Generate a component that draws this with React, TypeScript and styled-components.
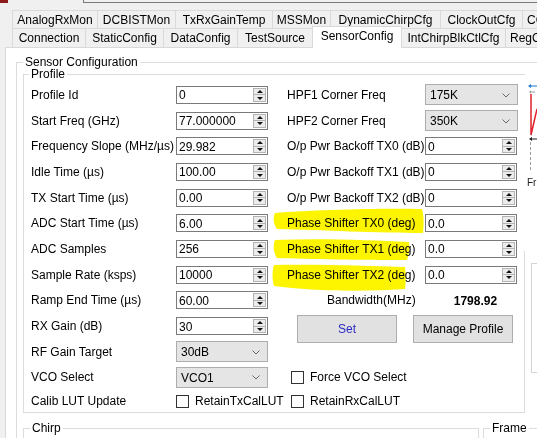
import React from 'react';
import styled, { createGlobalStyle, css } from 'styled-components';

const GlobalStyle = createGlobalStyle`
  html, body {
    margin: 0;
    padding: 0;
    background: #f0f0f0;
    overflow: hidden;
  }
  body {
    font-family: "Liberation Sans", Arial, sans-serif;
    font-size: 12px;
    color: #000;
  }
`;

const Root = styled.div`
  position: relative;
  width: 537px;
  height: 438px;
  overflow: hidden;
  display: flex;
  flex-direction: column;
  background: #f0f0f0;
`;

const TopStrip = styled.div`
  display: flex;
  height: 10px;
  flex: none;
`;

const AppIcon = styled.div`
  width: 8px;
  height: 3px;
  background: #8e1b1b;
`;

const TextBoxEdge = styled.div`
  margin-left: 75px;
  flex: 1;
  height: 2px;
  border-left: 1px solid #7a7a7a;
  border-bottom: 1px solid #7a7a7a;
`;

const TabRow = styled.div<{ $h: number }>`
  position: relative;
  z-index: 2;
  display: flex;
  align-items: flex-start;
  height: ${p => p.$h}px;
  padding-left: 12px;
  flex: none;
`;

const Tab = styled.div<{ $w: number; $active?: boolean; $clipped?: boolean }>`
  flex: none;
  box-sizing: border-box;
  width: ${p => p.$w}px;
  height: 100%;
  margin-right: -1px;
  display: flex;
  align-items: center;
  justify-content: ${p => (p.$clipped ? 'flex-start' : 'center')};
  padding-left: ${p => (p.$clipped ? '4px' : '0')};
  white-space: nowrap;
  border: 1px solid #d9d9d9;
  border-bottom: none;
  background: #f0f0f0;
  ${p =>
    p.$active &&
    css`
      position: relative;
      z-index: 1;
      height: 22px;
      margin-top: -2px;
      padding-bottom: 3px;
      background: #fff;
    `}
`;

const Page = styled.div`
  flex: 1;
  margin-left: 5px;
  border-left: 1px solid #d9d9d9;
  border-top: 1px solid #d9d9d9;
  background: #fff;
  overflow: hidden;
`;

const Group = styled.fieldset<{ $w: number; $mt: number; $ml: number; $h?: number }>`
  box-sizing: border-box;
  width: ${p => p.$w}px;
  ${p => p.$h && `min-height: ${p.$h}px;`}
  margin: ${p => p.$mt}px 0 0 ${p => p.$ml}px;
  padding: 0;
  min-width: 0;
  border: 1px solid #dcdcdc;
  flex: none;
`;

const GroupTitle = styled.legend<{ $ml: number }>`
  margin-left: ${p => p.$ml}px;
  padding: 0 2px;
  line-height: 10px;
  white-space: nowrap;
`;

const ProfileBody = styled.div`
  display: flex;
  padding: 3px 0 0 7px;
`;

const FieldGrid = styled.div<{ $cols: string; $ml?: number }>`
  display: grid;
  grid-template-columns: ${p => p.$cols};
  grid-template-rows: repeat(12, 25.7px) 22px;
  align-items: center;
  margin-left: ${p => p.$ml ?? 0}px;
`;

const Label = styled.div`
  white-space: nowrap;
  line-height: 14px;
`;

const SpinField = styled.div<{ $w: number }>`
  box-sizing: border-box;
  width: ${p => p.$w}px;
  height: 18px;
  display: flex;
  align-items: center;
  padding-left: 2px;
  border: 1px solid #7a7a7a;
  background: #fff;
`;

const SpinValue = styled.span`
  flex: 1;
  line-height: 14px;
  padding-top: 1px;
`;

const SpinButtons = styled.div`
  box-sizing: border-box;
  width: 13px;
  height: 14px;
  margin-right: 1px;
  display: flex;
  flex-direction: column;
  border: 1px solid #b4b4b4;
  background: #ececec;
`;

const SpinHalf = styled.div<{ $up?: boolean }>`
  flex: 1;
  display: flex;
  align-items: center;
  justify-content: center;
  ${p => p.$up && 'border-bottom: 1px solid #b4b4b4;'}
`;

const Arrow = styled.span<{ $up?: boolean }>`
  width: 0;
  height: 0;
  border-left: 3px solid transparent;
  border-right: 3px solid transparent;
  ${p => (p.$up ? 'border-bottom: 3px solid #111;' : 'border-top: 3px solid #111;')}
`;

const Combo = styled.div<{ $w: number }>`
  box-sizing: border-box;
  width: ${p => p.$w}px;
  height: 21px;
  display: flex;
  align-items: center;
  padding: 1px 7px 0 4px;
  border: 1px solid #adadad;
  background: #e5e5e5;
  span {
    flex: 1;
  }
`;

const CheckRow = styled.div<{ $ml?: number; $wide?: boolean }>`
  display: flex;
  align-items: center;
  gap: 6px;
  white-space: nowrap;
  margin-left: ${p => p.$ml ?? 0}px;
  grid-column: ${p => (p.$wide ? '1 / -1' : '2 / -1')};
`;

const CheckBox = styled.span`
  box-sizing: border-box;
  width: 13px;
  height: 13px;
  flex: none;
  border: 1px solid #333;
  background: #fff;
`;

const WideRow = styled.div`
  grid-column: 1 / -1;
  display: flex;
  align-items: center;
  white-space: nowrap;
`;

const Bandwidth = styled(WideRow)`
  padding-left: 40px;
  gap: 38px;
  b {
    font-weight: bold;
    padding-top: 2px;
  }
`;

const ButtonRow = styled(WideRow)`
  grid-row: span 2;
  align-self: start;
  margin-top: 1.5px;
  padding-left: 10px;
  gap: 16px;
`;

const ActionButton = styled.button<{ $primary?: boolean }>`
  box-sizing: border-box;
  width: 100px;
  height: 28px;
  padding: 0;
  border: 1px solid #adadad;
  background: #e1e1e1;
  font-family: inherit;
  font-size: 12px;
  color: ${p => (p.$primary ? '#2a2ac4' : '#000')};
`;

const BottomRow = styled.div`
  display: flex;
  margin-top: 10px;
`;

const ChartPane = styled.div`
  position: absolute;
  left: 521px;
  top: 75px;
  width: 40px;
  display: flex;
  flex-direction: column;
  z-index: 3;
`;

const ChartArea = styled.div`
  width: 16px;
  height: 176px;
  background: #fff;
  display: flex;
  flex-direction: column;
`;

const ChartAxis = styled.span`
  margin: 2px 0 0 6px;
  font-size: 10px;
  line-height: 12px;
  color: #222;
`;

const ChartFrame = styled.div`
  box-sizing: border-box;
  margin: 12px 0 0 10px;
  width: 20px;
  height: 110px;
  border: 1px solid #d4d4d4;
  background: #fff;
`;

const Highlights = styled.svg`
  position: absolute;
  left: 0;
  top: 0;
  z-index: 4;
  pointer-events: none;
  mix-blend-mode: multiply;
`;

function SpinBox({ value, w = 92 }: { value: string; w?: number }) {
  return (
    <SpinField $w={w}>
      <SpinValue>{value}</SpinValue>
      <SpinButtons>
        <SpinHalf $up>
          <Arrow $up />
        </SpinHalf>
        <SpinHalf>
          <Arrow />
        </SpinHalf>
      </SpinButtons>
    </SpinField>
  );
}

function ComboBox({ value, w = 92 }: { value: string; w?: number }) {
  return (
    <Combo $w={w}>
      <span>{value}</span>
      <svg width="8" height="5" viewBox="0 0 8 5">
        <polyline points="0.5,0.5 4,4 7.5,0.5" fill="none" stroke="#6a6a6a" strokeWidth="1" />
      </svg>
    </Combo>
  );
}

// [name, width in px]; the last tab of each row runs off the window
const tabsTop: [string, number][] = [
  ['AnalogRxMon', 86],
  ['DCBISTMon', 79],
  ['TxRxGainTemp', 98],
  ['MSSMon', 59],
  ['DynamicChirpCfg', 111],
  ['ClockOutCfg', 83],
  ['CQMon', 60],
];

const tabsBottom: [string, number][] = [
  ['Connection', 74],
  ['StaticConfig', 79],
  ['DataConfig', 75],
  ['TestSource', 76],
  ['SensorConfig', 90],
  ['IntChirpBlkCtlCfg', 105],
  ['RegOp', 60],
];

const leftSpins: [string, string][] = [
  ['Profile Id', '0'],
  ['Start Freq (GHz)', '77.000000'],
  ['Frequency Slope (MHz/µs)', '29.982'],
  ['Idle Time (µs)', '100.00'],
  ['TX Start Time (µs)', '0.00'],
  ['ADC Start Time (µs)', '6.00'],
  ['ADC Samples', '256'],
  ['Sample Rate (ksps)', '10000'],
  ['Ramp End Time (µs)', '60.00'],
  ['RX Gain (dB)', '30'],
];

const rightSpins: [string, string][] = [
  ['O/p Pwr Backoff TX0 (dB)', '0'],
  ['O/p Pwr Backoff TX1 (dB)', '0'],
  ['O/p Pwr Backoff TX2 (dB)', '0'],
  ['Phase Shifter TX0 (deg)', '0.0'],
  ['Phase Shifter TX1 (deg)', '0.0'],
  ['Phase Shifter TX2 (deg)', '0.0'],
];

export default function App() {
  return (
    <Root>
      <GlobalStyle />
      <TopStrip>
        <AppIcon />
        <TextBoxEdge />
      </TopStrip>

      <TabRow $h={18}>
        {tabsTop.map(([name, w], i) => (
          <Tab key={name} $w={w} $clipped={i === tabsTop.length - 1}>
            {name}
          </Tab>
        ))}
      </TabRow>
      <TabRow $h={19}>
        {tabsBottom.map(([name, w], i) => (
          <Tab
            key={name}
            $w={w}
            $active={name === 'SensorConfig'}
            $clipped={i === tabsBottom.length - 1}
          >
            {name}
          </Tab>
        ))}
      </TabRow>

      <Page>
        <Group $w={600} $mt={9} $ml={10} $h={420}>
          <GroupTitle $ml={6}>Sensor Configuration</GroupTitle>

          <Group $w={502} $mt={2} $ml={6}>
            <GroupTitle $ml={5}>Profile</GroupTitle>
            <ProfileBody>
              <FieldGrid $cols="145px 92px">
                {leftSpins.map(([label, value]) => (
                  <React.Fragment key={label}>
                    <Label>{label}</Label>
                    <SpinBox value={value} />
                  </React.Fragment>
                ))}
                <Label>RF Gain Target</Label>
                <ComboBox value="30dB" />
                <Label>VCO Select</Label>
                <ComboBox value="VCO1" />
                <Label>Calib LUT Update</Label>
                <CheckRow>
                  <CheckBox />
                  RetainTxCalLUT
                </CheckRow>
              </FieldGrid>

              <FieldGrid $cols="138px 93px" $ml={19}>
                <Label>HPF1 Corner Freq</Label>
                <ComboBox value="175K" w={93} />
                <Label>HPF2 Corner Freq</Label>
                <ComboBox value="350K" w={93} />
                {rightSpins.map(([label, value]) => (
                  <React.Fragment key={label}>
                    <Label>{label}</Label>
                    <SpinBox value={value} />
                  </React.Fragment>
                ))}
                <Bandwidth>
                  <span>Bandwidth(MHz)</span>
                  <b>1798.92</b>
                </Bandwidth>
                <ButtonRow>
                  <ActionButton $primary>Set</ActionButton>
                  <ActionButton>Manage Profile</ActionButton>
                </ButtonRow>
                <CheckRow $ml={4} $wide>
                  <CheckBox />
                  Force VCO Select
                </CheckRow>
                <CheckRow $ml={4} $wide>
                  <CheckBox />
                  RetainRxCalLUT
                </CheckRow>
              </FieldGrid>
            </ProfileBody>
          </Group>

          <BottomRow>
            <Group $w={456} $mt={0} $ml={6} $h={60}>
              <GroupTitle $ml={6}>Chirp</GroupTitle>
            </Group>
            <Group $w={120} $mt={0} $ml={4} $h={60}>
              <GroupTitle $ml={6}>Frame</GroupTitle>
            </Group>
          </BottomRow>
        </Group>
      </Page>

      <ChartPane>
        <ChartArea>
          <svg width="16" height="100" viewBox="0 0 16 100">
            <line x1="9" y1="11" x2="16" y2="11" stroke="#1f77d0" strokeWidth="1" />
            <polygon points="7,11 10,9 10,13" fill="#1f77d0" />
            <line x1="9" y1="17" x2="14" y2="17" stroke="#9a9a9a" strokeWidth="1" />
            <polygon points="8,17 10,15.5 10,18.5" fill="#9a9a9a" />
            <polyline points="10,19 10,60 16,34" fill="none" stroke="#e0202a" strokeWidth="1.5" />
            <line x1="10" y1="64" x2="16" y2="64" stroke="#222" strokeWidth="1" />
            <polygon points="8,64 11,62 11,66" fill="#222" />
            <line x1="9.5" y1="67" x2="9.5" y2="95" stroke="#9a9a9a" strokeWidth="1" strokeDasharray="3 2" />
          </svg>
          <ChartAxis>Fr</ChartAxis>
        </ChartArea>
        <ChartFrame />
      </ChartPane>

      <Highlights width="537" height="438" viewBox="0 0 537 438">
        <path
          d="M275,213 C310,210 380,208 422,209 C424,216 424,226 423,233 C380,233 320,230 277,229 C273,224 273,217 275,213 Z"
          fill="#fdf500"
        />
        <path
          d="M275,240 C320,238 370,240 409,242 C410,248 409,255 407,260 C360,260 310,259 277,258 C273,252 273,245 275,240 Z"
          fill="#fdf500"
        />
        <path
          d="M274,265 C320,264 370,266 405,267 C406,274 406,282 405,289 C360,292 310,291 274,286 C272,279 272,271 274,265 Z"
          fill="#fdf500"
        />
      </Highlights>
    </Root>
  );
}
